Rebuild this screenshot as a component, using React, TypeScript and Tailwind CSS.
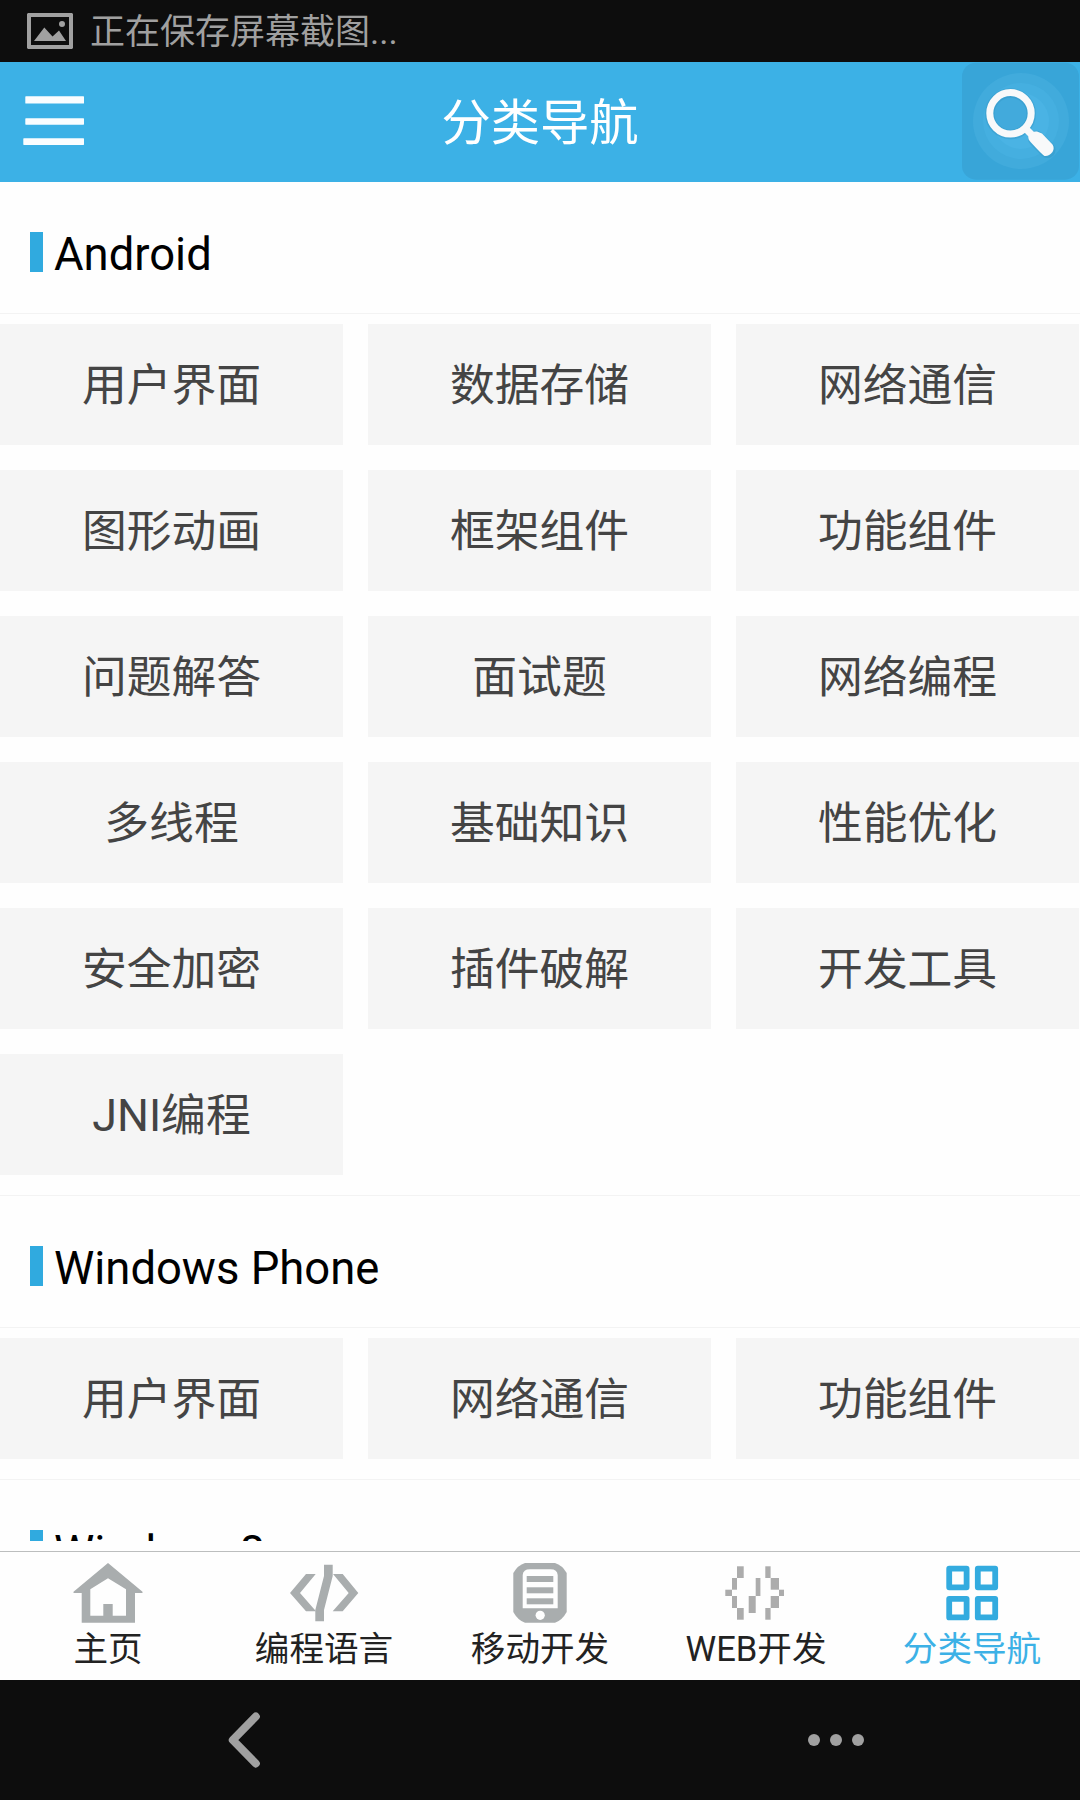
import type { ReactNode } from "react";

const sections = [
  {
    title: "Android",
    items: [
      "用户界面", "数据存储", "网络通信",
      "图形动画", "框架组件", "功能组件",
      "问题解答", "面试题", "网络编程",
      "多线程", "基础知识", "性能优化",
      "安全加密", "插件破解", "开发工具",
      "JNI编程",
    ],
  },
  { title: "Windows Phone", items: ["用户界面", "网络通信", "功能组件"] },
  { title: "Windows8", items: [] },
];

function PictureIcon() {
  return (
    <svg className="h-9 w-[46px]" viewBox="0 0 46 36" fill="#a0a0a0">
      <path fillRule="evenodd" d="M1 0h44l1 1v34l-1 1H1l-1-1V1zM4 4v28h38V4z" />
      <path d="M7 28 17.3 14.5 25.5 23.5 32 17.5 39 28z" />
      <circle cx="35" cy="11" r="3" />
    </svg>
  );
}

function MenuIcon() {
  return (
    <svg className="h-[52px] w-[62px]" viewBox="0 0 62 52" fill="#fafdff">
      <rect x="2.3" y="0.3" width="58.7" height="7.2" rx="0.6" />
      <rect x="2.3" y="22.3" width="58.7" height="6.4" rx="0.6" />
      <rect x="0.3" y="42.3" width="60.7" height="6.6" rx="0.6" />
    </svg>
  );
}

function SearchIcon() {
  return (
    <svg className="h-[120px] w-[120px]" viewBox="0 0 120 120">
      <rect x="2" y="0.7" width="117" height="117" rx="14" fill="#38a5d8" />
      <circle cx="61" cy="59" r="48" fill="#41abdc" />
      <circle cx="61" cy="59" r="38" fill="#45afe0" />
      <circle cx="61" cy="59" r="28" fill="#4ab3e4" />
      <circle cx="50.5" cy="51.3" r="17" fill="#42aadc" />
      <g fill="none" stroke="#2f8fbd" strokeOpacity="0.35">
        <circle cx="50.5" cy="51.8" r="20.7" strokeWidth="9.5" />
        <path d="M76 76.5 87.5 88" strokeWidth="16" strokeLinecap="round" />
      </g>
      <g fill="none" stroke="#f8f9fa">
        <circle cx="50.5" cy="51.3" r="20.7" strokeWidth="7" />
        <path d="M65 66 75 76" strokeWidth="7" />
      </g>
      <path
        d="M68.5 74 Q72 69 77 69.5 L82 71.5 L92.5 82.5 Q94.8 86 92.5 90 Q89 94.5 84.5 94 Q82 92.5 71 80.5 Q67.5 77 68.5 74z"
        fill="#f8f9fa"
      />
    </svg>
  );
}

function NavIcon({ children, color }: { children: ReactNode; color: string }) {
  return (
    <svg className="h-16 w-[72px] shrink-0" viewBox="0 0 72 64" fill={color}>
      {children}
    </svg>
  );
}

const webBlocks = [
  [17, 6.3, 6.7, 11.7], [12, 18, 5, 11.7], [5.3, 29.7, 6.7, 6.3],
  [12, 36, 5, 12], [17, 48, 6.7, 11.7],
  [35.7, 18, 4.7, 18], [28.7, 36, 7, 17],
  [45.3, 6.3, 5.3, 11.7], [50.7, 18, 8.3, 11.7], [59, 29.7, 5, 6.3],
  [50.7, 36, 8.3, 12], [45.3, 48, 5.3, 11.7],
];

const tabs = [
  {
    label: "主页",
    icon: (
      <NavIcon color="#a9adae">
        <path
          fillRule="evenodd"
          d="M36 3 70.5 31.8V33H63V62.7H9.7V33H1.5V31.8zM36 18.3 18.3 29.3V55.7H31.3V44H40.7V55.7H54V29.3z"
        />
      </NavIcon>
    ),
  },
  {
    label: "编程语言",
    icon: (
      <NavIcon color="#a9adae">
        <path d="M18 14h9.7L12 33 28 51.3H18L2 33z" />
        <path d="M45 14h9.7L70.3 33 54.7 51.3h-10L60.7 33z" />
        <path d="M36 4.7h8.7V16L36 50V61.3H27.3V50L36 16z" />
      </NavIcon>
    ),
  },
  {
    label: "移动开发",
    icon: (
      <NavIcon color="#a9adae">
        <path d="M21 3H51Q58 5 62.7 13V52Q58 60.5 51 62.7H21Q14 60.5 9.3 52V13Q14 5 21 3z" />
        <path d="M18.7 48.3V15Q19 9.3 26 9.3H46.5Q53.3 9.3 53.7 15V48.3z" fill="#fefefe" />
        <rect x="22.7" y="16" width="26.6" height="6" />
        <rect x="22.7" y="27.3" width="26.6" height="6" />
        <rect x="22.7" y="38.3" width="26.6" height="6" />
        <circle cx="36.2" cy="55.3" r="4.6" fill="#fefefe" />
      </NavIcon>
    ),
  },
  {
    label: "WEB开发",
    icon: (
      <NavIcon color="#acacac">
        {webBlocks.map(([x, y, w, h]) => (
          <rect key={`${x}-${y}`} x={x} y={y} width={w} height={h} />
        ))}
      </NavIcon>
    ),
  },
  {
    label: "分类导航",
    active: true,
    icon: (
      <NavIcon color="none">
        <g stroke="#33abdf" strokeWidth="5.8" strokeLinejoin="round">
          <rect x="13.2" y="8.7" width="17.4" height="18.6" />
          <rect x="41.8" y="8.7" width="17.4" height="18.6" />
          <rect x="13.2" y="38.8" width="17.4" height="18.6" />
          <rect x="41.8" y="38.8" width="17.4" height="18.6" />
        </g>
      </NavIcon>
    ),
  },
];

export default function App() {
  return (
    <div className="flex h-[1800px] w-[1080px] flex-col overflow-hidden bg-[#fefefe] font-[Roboto,'Noto_Sans_CJK_SC',sans-serif]">
      <div className="flex h-[62px] shrink-0 items-center bg-[#0d0d0d] pl-[27px] text-[35px] text-[#a0a0a0]">
        <PictureIcon />
        <span className="ml-[17px] pt-1 leading-[58px]">正在保存屏幕截图...</span>
      </div>

      <header className="grid h-[120px] shrink-0 grid-cols-[120px_1fr_120px] items-center bg-[#3cb1e6]">
        <button className="pl-[23px]" aria-label="菜单">
          <MenuIcon />
        </button>
        <h1 className="pt-0.5 text-center text-[49.3px] leading-[117px] text-white">分类导航</h1>
        <button aria-label="搜索">
          <SearchIcon />
        </button>
      </header>

      <main className="h-[1359px] shrink-0 overflow-hidden">
        {sections.map((section) => (
          <section key={section.title} className="border-b border-[#f3f3f3] pb-5">
            <div className="flex h-[132px] items-start border-b border-[#f3f3f3] pt-[50px] pl-[30px]">
              <span className="h-10 w-[13px] bg-[#30aadf]" />
              <h2 className="ml-[11px] text-[45.4px] leading-[46px] text-black">{section.title}</h2>
            </div>
            <div className="mt-2.5 grid grid-cols-[343px_343px_343px] gap-[25px]">
              {section.items.map((item) => (
                <button
                  key={item}
                  className="h-[121px] bg-[#f5f5f5] pt-[3px] text-[44.8px] leading-[118px] text-[#444]"
                >
                  {item}
                </button>
              ))}
            </div>
          </section>
        ))}
      </main>

      <nav className="mt-2.5 grid h-[129px] shrink-0 grid-cols-5 border-t border-[#bcbebe]">
        {tabs.map((tab) => (
          <button
            key={tab.label}
            className={`flex flex-col items-center pt-2 text-[34.6px] leading-[48px] ${
              tab.active ? "text-[#3cb1e6]" : "text-[#222]"
            }`}
          >
            {tab.icon}
            <span className="pt-px">{tab.label}</span>
          </button>
        ))}
      </nav>

      <div className="flex h-[120px] shrink-0 items-center justify-between bg-[#0d0d0d] pr-[214px] pl-[226px]">
        <svg className="h-16 w-9" viewBox="0 0 36 64" fill="none">
          <path
            d="M29.8 8.5 6.8 32 29.8 55.5"
            stroke="#a0a0a0"
            strokeWidth="8"
            strokeLinecap="round"
            strokeLinejoin="round"
          />
        </svg>
        <svg className="h-3 w-[60px]" viewBox="0 0 60 12" fill="#a0a0a0">
          <circle cx="8" cy="6" r="6" />
          <circle cx="30" cy="6" r="6" />
          <circle cx="52" cy="6" r="6" />
        </svg>
      </div>
    </div>
  );
}
